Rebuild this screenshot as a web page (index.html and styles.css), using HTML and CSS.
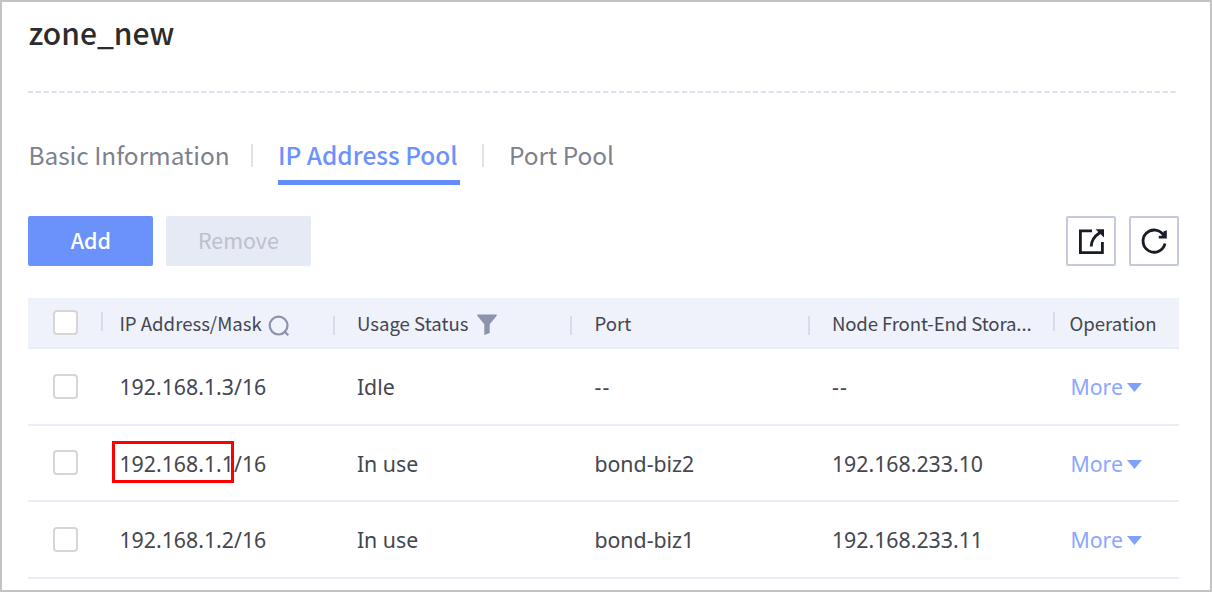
FILE: index.html
```
<!DOCTYPE html>
<html lang="en">
<head>
<meta charset="utf-8">
<title>zone_new</title>
<link rel="stylesheet" href="styles.css">
</head>
<body>
<main class="frame">
  <h1 class="title">zone_new</h1>
  <svg class="divider" width="1151" height="2"><line x1="0" y1="1" x2="1150" y2="1"/></svg>
  <nav class="tabs">
    <a class="tab">Basic Information</a>
    <a class="tab tab-active">IP Address Pool</a>
    <a class="tab">Port Pool</a>
  </nav>
  <div class="toolbar">
    <button class="btn btn-primary">Add</button>
    <button class="btn btn-disabled">Remove</button>
    <button class="icon-btn icon-first" aria-label="Export">
      <svg width="50" height="50" viewBox="0 0 50 50" fill="none" stroke="#191c27" stroke-width="2.8"><path d="M26 14.8H14.4V36.6H36.4V26"/><path d="M25.2 30.6C25.2 25 28 20.5 34 16.5"/><path d="M29.6 13.2H38V21.6Z" fill="#191c27" stroke="none"/></svg>
    </button>
    <button class="icon-btn" aria-label="Refresh">
      <svg width="50" height="50" viewBox="0 0 50 50" fill="none" stroke="#191c27" stroke-width="2.8"><path d="M36 27.5A11.1 11.1 0 1 1 34.8 19.6"/><path d="M37.8 14.2V22.4H29.8V19.8H34.4V15.5Z" fill="#191c27" stroke="none"/></svg>
    </button>
  </div>
  <section class="table">
    <div class="row head">
      <div><span class="check"></span></div>
      <div class="cell sep high">IP Address/Mask
        <svg class="search" width="24" height="24" viewBox="0 0 24 24" fill="none" stroke="#8d93ab" stroke-width="2.2"><circle cx="11.6" cy="11.6" r="8.9"/><path d="M17 17L21.3 21.3"/></svg>
      </div>
      <div class="cell sep">Usage Status
        <svg class="filter" width="20" height="22" viewBox="0 0 20 22"><path d="M.3.5H19.7V1.8L12.7 10.2V19L7.3 21V10.2L.3 1.8Z" fill="#8d93ab"/></svg>
      </div>
      <div class="cell sep">Port</div>
      <div class="cell sep tight">Node Front-End Stora...</div>
      <div class="cell sep high">Operation</div>
    </div>
    <div class="row">
      <div><span class="check"></span></div>
      <div class="cell">192.168.1.3/16</div><div class="cell">Idle</div><div class="cell dash">--</div><div class="cell dash">--</div>
      <div class="cell more">More<svg width="15" height="9"><path d="M0 0H15L7.5 9Z"/></svg></div>
    </div>
    <div class="row">
      <div><span class="check"></span></div>
      <div class="cell"><span class="marked">192.168.1.1</span>/16</div><div class="cell">In use</div><div class="cell">bond-biz2</div><div class="cell">192.168.233.10</div>
      <div class="cell more">More<svg width="15" height="9"><path d="M0 0H15L7.5 9Z"/></svg></div>
    </div>
    <div class="row">
      <div><span class="check"></span></div>
      <div class="cell">192.168.1.2/16</div><div class="cell">In use</div><div class="cell">bond-biz1</div><div class="cell">192.168.233.11</div>
      <div class="cell more">More<svg width="15" height="9"><path d="M0 0H15L7.5 9Z"/></svg></div>
    </div>
  </section>
</main>
</body>
</html>
```

FILE: styles.css
```
*, *::before, *::after { box-sizing: border-box; }
body { margin: 0; background: #fff; color: #444650; font-family: "Noto Sans CJK SC", "Noto Sans", sans-serif; }
.frame { width: 1212px; height: 592px; padding: 0 31.5px 0 26.4px; border: 2px solid #c3c3c3; overflow: hidden; }
.title { height: 89px; margin: 0; padding-top: 10px; font-size: 30px; line-height: 40px; font-weight: 500; color: #2c2c2c; }
.divider { display: block; }
.divider line { stroke: #dcdfed; stroke-width: 2; stroke-dasharray: 5 2.88; }
.tabs { display: flex; height: 123px; padding-top: 42px; }
.tab { height: 50px; font-size: 24.4px; line-height: 40px; color: #7d818f; white-space: nowrap; }
.tab:not(:first-child) { position: relative; margin-left: 49px; }
.tab:not(:first-child)::before { content: ""; position: absolute; left: -27px; top: 9px; width: 2px; height: 23px; background: #dfe1ee; }
.tab:first-child { width: 200.6px; }
.tab-active { width: 182px; font-weight: 500; color: #6d92fc; border-bottom: 5px solid #648bfa; }
.toolbar { display: flex; gap: 12.5px; height: 50px; }
.btn, .icon-btn { height: 50px; padding: 0; border: 0; border-radius: 2px; font: 21.4px "Noto Sans CJK SC", sans-serif; }
.btn { padding-bottom: 3px; }
.btn-primary { width: 125px; background: #6b91fa; color: #fff; font-weight: 500; }
.btn-disabled { width: 145px; background: #e6eaf5; color: #bcc0ce; }
.icon-btn { width: 50px; background: #fff; box-shadow: inset 0 0 0 2px #c5cada; }
.icon-btn svg { display: block; }
.icon-first { margin-left: auto; }
.table { margin-top: 32px; }
.row { display: grid; grid-template-columns: 74px 237.5px 237.5px 237.5px 237.5px 126px; height: 76.5px; align-items: center; border-bottom: 2px solid #e9edf8; font-family: "Noto Sans", sans-serif; font-size: 21.3px; }
.head { height: 51px; background: #eff2fa; font-family: "Noto Sans CJK SC", sans-serif; font-size: 18.6px; }
.check { display: block; width: 25px; height: 25px; margin-left: 25px; border: 2px solid #d6d6d6; border-radius: 4px; background: #fff; }
.cell { position: relative; padding: 2px 0 0 17px; line-height: 30px; white-space: nowrap; }
.head .cell { padding-top: 0; }
.sep::before { content: ""; position: absolute; left: -7px; top: 8px; width: 2px; height: 19px; background: #d9dce7; }
.high::before { top: 4px; }
.head .cell:nth-child(2)::before { left: -1px; }
.head .cell:last-child::before { left: 1px; }
.tight { letter-spacing: -.12px; }
.search { vertical-align: -7px; margin-left: 1px; }
.filter { vertical-align: -5px; margin-left: 4px; }
.dash { letter-spacing: 1.3px; }
.more { display: flex; align-items: center; gap: 4px; padding-left: 18px; color: #8ba8ff; }
.more svg { fill: #81a0fb; margin-top: 1px; }
.marked { position: relative; }
.marked::after { content: ""; position: absolute; left: -7px; top: -8px; width: 122px; height: 42px; border: 3px solid #f00; }
```
